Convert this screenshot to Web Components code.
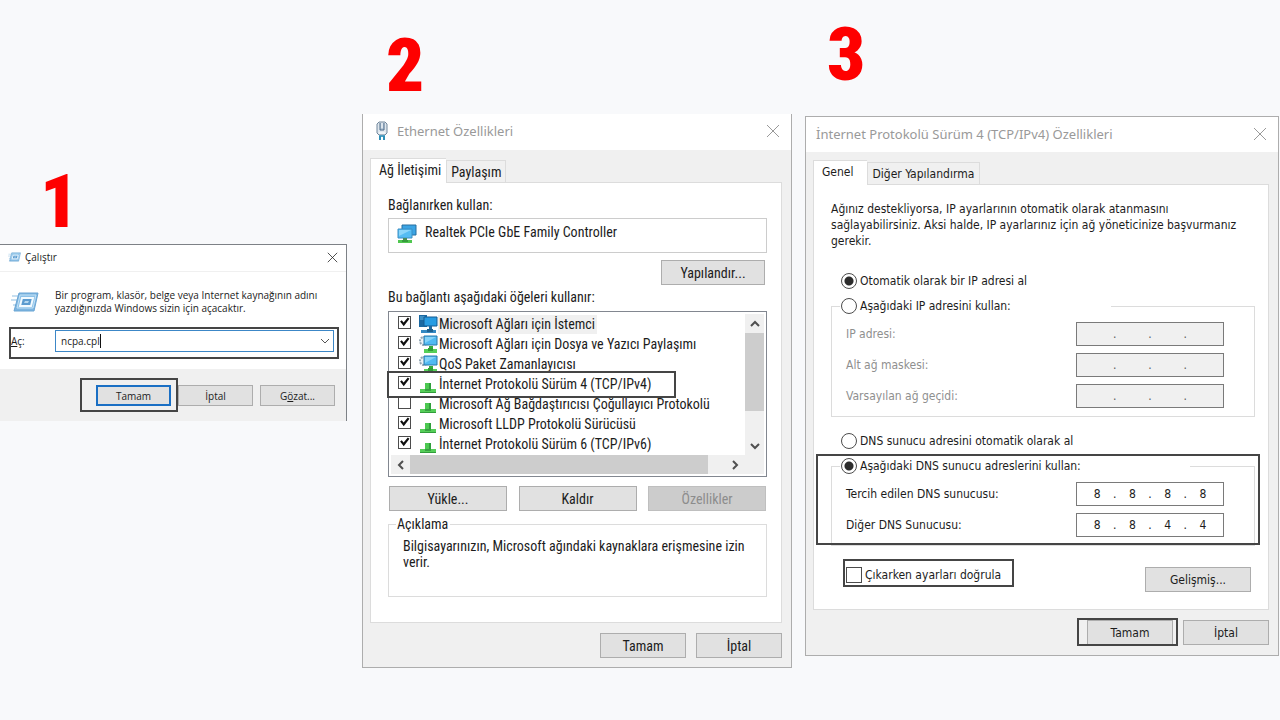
<!DOCTYPE html>
<html lang="tr">
<head>
<meta charset="utf-8">
<meta name="viewport" content="width=device-width, initial-scale=1">
<title>DNS Ayarları</title>
<style>
  body {
    margin: 0;
    background: #f8f9fb;
    color: #1c1c1c;
    font-family: "Liberation Sans", Arial, sans-serif;
  }
  .steps {
    display: grid;
    grid-template-columns: 349fr 430fr 474fr;
    column-gap: 13px;
    padding-right: 1px;
    align-items: start;
  }
  .step-run { padding-top: 173px; --number-indent: 40px; --number-gap: 15px; margin-right: 2px; }
  .step-adapter { padding-top: 37px; --number-indent: 24px; --number-gap: 21px; }
  .step-ipv4 { padding-top: 26px; --number-indent: 22px; --number-gap: 34px; }
</style>
</head>
<body>
<main class="steps">
  <step-column class="step-run" number="1"><run-dialog></run-dialog></step-column>
  <step-column class="step-adapter" number="2"><adapter-dialog></adapter-dialog></step-column>
  <step-column class="step-ipv4" number="3"><ipv4-dialog></ipv4-dialog></step-column>
</main>

<script>
// ---------- icons ----------
const ICONS = {
  run: `
    <svg viewBox="0 0 28 20" aria-hidden="true">
      <path d="M1 4h8M0 8h7M2 13h5" stroke="#8fbfe2" stroke-width="1"/>
      <path d="M8 1h19l-4 18H3z" fill="#7db5e0" stroke="#6aa5d4"/>
      <path d="M9 3h16l-3 13H6z" fill="#8cc1e8" stroke="#c4e2f6" stroke-width="1"/>
      <path d="M11 6h11l-2 8H9z" fill="#5b9bcf" stroke="#f2faff" stroke-width="2"/>
      <path d="M14 9h4l-1 2h-4z" fill="#b4d7ef"/>
    </svg>`,
  plug: `
    <svg viewBox="0 0 12 20" aria-hidden="true">
      <path d="M3 1h6l2 2v9l-2 2H3l-2-2V3z" fill="#dfe7ee" stroke="#71869b"/>
      <path d="M4 2v7h4V2" fill="#b9cad9" stroke="#4d6b88"/>
      <path d="M6 2v5M3 12h6" stroke="#fff"/>
      <path d="M3 14h6v2H3z" fill="#4f9fc2"/>
      <path d="M3 15h2v4H3zM7 15h2v4H7z" fill="#2d8fb8"/>
    </svg>`,
  adapter: `
    <svg viewBox="0 0 20 20" aria-hidden="true">
      <path d="M5 1h14v10H5z" fill="#3ba4e4" stroke="#276f9f"/>
      <path d="M1 5h14v9H1z" fill="#55bdf3" stroke="#3c8fc4"/>
      <path d="M2 6h12L2 12z" fill="#8cd6fa"/>
      <path d="M6 14h4v2H6z" fill="#4d8d5b"/>
      <path d="M1 16h14v3H1z" fill="#50c750"/>
      <path d="M5 16h6v2H5z" fill="#379c3d"/>
    </svg>`,
  client: `
    <svg viewBox="0 0 20 20" aria-hidden="true">
      <path d="M1 1h8v12H1z" fill="#1b68a1"/>
      <path d="M2 3h5M2 5h5" stroke="#65b9e8"/>
      <path d="M6 3h13v9H6z" fill="#289ce2" stroke="#155b91"/>
      <path d="M11 12h3v4h-3z" fill="#226ba0"/>
      <path d="M3 16h15v3H3z" fill="#3489c2"/>
      <path d="M9 15h6v3H9z" fill="#1f5f8d"/>
    </svg>`,
  service: `
    <svg viewBox="0 0 20 20" aria-hidden="true">
      <circle cx="6" cy="7" r="4" fill="#edf2f5" stroke="#8fa3b1" stroke-width="2" stroke-dasharray="2 1"/>
      <path d="M6 2h13v9H6z" fill="#51baf2" stroke="#2b78a8"/>
      <path d="M7 3h11L7 9z" fill="#86d3f9"/>
      <path d="M11 12h4v4h-4z" fill="#35aa3b"/>
      <path d="M6 15h13v4H6z" fill="#55cf58"/>
      <path d="M10 14h5v3h-5z" fill="#319c38"/>
    </svg>`,
  protocol: `
    <svg viewBox="0 0 20 20" aria-hidden="true">
      <path d="M7 9h6v7H7z" fill="#4cc851"/>
      <path d="M11 9h2v7h-2z" fill="#2f9f3a"/>
      <path d="M2 15h16v4H2z" fill="#55ce58"/>
      <path d="M2 18h16v1H2z" fill="#319c3c"/>
      <path d="M7 15h6v2H7z" fill="#399f43"/>
    </svg>`,
  close: `
    <svg viewBox="0 0 14 14" aria-hidden="true">
      <path d="M1 1l12 12M13 1L1 13" fill="none" stroke="currentColor"/>
    </svg>`,
  chevron: `
    <svg viewBox="0 0 10 10" aria-hidden="true">
      <path d="M1 3l4 4 4-4" fill="none" stroke="currentColor" stroke-width="var(--chevron-stroke, 2)"/>
    </svg>`
};

// ---------- base ----------
class UiElement extends HTMLElement {
  constructor() {
    super();
    this.attachShadow({ mode: 'open' });
  }

  connectedCallback() {
    this.shadowRoot.innerHTML = `
      <style>
        *, *::before, *::after { box-sizing: border-box; }
        :host { display: block; box-sizing: border-box; }
        svg { display: block; width: 100%; height: 100%; }
      </style>
      ${this.render()}
    `;
  }
}

// ---------- shared pieces ----------
class StepColumn extends UiElement {
  render() {
    return `
      <style>
        :host { min-width: 0; }
        h2 {
          margin: 0 0 var(--number-gap) var(--number-indent);
          color: #fe0000;
          font: 900 75px/56px "Roboto Condensed", Roboto, sans-serif;
        }
      </style>
      <h2>${this.getAttribute('number')}</h2>
      <slot></slot>
    `;
  }
}

class WinDialog extends UiElement {
  render() {
    const icon = this.getAttribute('icon');
    return `
      <style>
        :host {
          background: #f0f0f0;
          border: 1px solid #adadad;
          font-size: var(--ui-size);
        }
        header {
          display: flex;
          align-items: center;
          height: var(--title-height, 36px);
          padding: 0 var(--title-right, 11px) 2px var(--title-left, 10px);
          background: #fff;
          color: var(--title-color, #999);
        }
        .icon { flex: none; width: var(--icon-width, 12px); height: var(--icon-height, 20px); margin-right: var(--icon-gap, 9px); }
        h3 { flex: 1; margin: 0; font: var(--title-font, 13px/18px "Noto Sans", sans-serif); white-space: nowrap; }
        button { flex: none; width: var(--close-size, 14px); height: var(--close-size, 14px); padding: 0; border: 0; background: none; color: inherit; }
      </style>
      <header>
        ${icon ? `<span class="icon">${ICONS[icon]}</span>` : ''}
        <h3>${this.getAttribute('heading')}</h3>
        <button aria-label="Kapat">${ICONS.close}</button>
      </header>
      <slot></slot>
    `;
  }
}

class WinButton extends UiElement {
  render() {
    return `
      <style>
        :host { width: var(--button-width, 86px); height: var(--button-height, 25px); }
        button {
          width: 100%;
          height: 100%;
          padding: 0;
          border: 1px solid #adadad;
          background: #e1e1e1;
          color: inherit;
          font: inherit;
        }
        button:disabled { background: #ccc; border-color: #bfbfbf; color: #8c8c8c; }
        :host([default]) button { border: 2px solid #1a6fc4; }
      </style>
      <button ${this.hasAttribute('disabled') ? 'disabled' : ''}><slot></slot></button>
    `;
  }
}

// Dark outline drawn over the wrapped content, spread by --spread.
class MarkBox extends UiElement {
  render() {
    return `
      <style>
        :host { position: relative; }
        :host::after {
          content: "";
          position: absolute;
          inset: var(--spread, -4px);
          border: 2px solid #454545;
          pointer-events: none;
        }
      </style>
      <slot></slot>
    `;
  }
}

class TabPanel extends UiElement {
  render() {
    const [active, other] = this.getAttribute('tabs').split('|');
    return `
      <style>
        :host { padding: 8px 9px 0 7px; }
        [role=tablist] { display: flex; align-items: flex-end; }
        button {
          height: 22px;
          padding: 0 var(--tab-padding, 5px);
          border: 1px solid #dcdcdc;
          border-bottom: 0;
          background: #f0f0f0;
          color: inherit;
          font: inherit;
          white-space: nowrap;
        }
        button[aria-selected=true] {
          position: relative;
          height: 25px;
          margin-bottom: -1px;
          padding: 0 var(--tab-end, 10px) 2px 8px;
          border-right: 0;
          background: #fff;
        }
        section { border: 1px solid #dcdcdc; background: #fff; padding: var(--panel-padding); }
      </style>
      <div role="tablist">
        <button role="tab" aria-selected="true">${active}</button>
        <button role="tab" aria-selected="false">${other}</button>
      </div>
      <section role="tabpanel" aria-label="${active}"><slot></slot></section>
    `;
  }
}

class GroupBox extends UiElement {
  render() {
    return `
      <style>
        fieldset {
          min-width: 0;
          margin: 0;
          padding: var(--group-padding);
          border: 1px solid #dcdcdc;
        }
        legend { min-width: var(--legend-width, 0); height: 18px; line-height: 18px; margin-left: var(--legend-left, -7px); padding: 0 2px 0 1px; }
      </style>
      <fieldset>
        <legend><slot name="legend"></slot></legend>
        <slot></slot>
      </fieldset>
    `;
  }
}

// Radio button or tick box with its text; kind="radio" or kind="checkbox".
class ChoiceOption extends UiElement {
  render() {
    const kind = this.getAttribute('kind');
    return `
      <style>
        label { display: flex; align-items: center; gap: 3px; height: 18px; white-space: nowrap; }
        input { appearance: none; flex: none; width: 16px; height: 16px; margin: 0; border: 1px solid #4c4c4c; background: #fff; }
        input[type=radio] { border-radius: 50%; }
        input[type=radio]:checked { background: radial-gradient(circle, #2c2c2c 0 4px, #fff 5px); }
      </style>
      <label>
        <input type="${kind}" ${this.hasAttribute('checked') ? 'checked' : ''}>
        <span><slot></slot></span>
      </label>
    `;
  }
}

// ---------- step 1 ----------
class RunDialog extends UiElement {
  render() {
    return `
      <style>
        :host { --ui-size: 10px; font-family: "Open Sans", sans-serif; }
        win-dialog {
          --title-height: 26px;
          --title-left: 8px;
          --title-right: 8px;
          --title-color: #222;
          --title-font: 10px "Open Sans", sans-serif;
          --icon-width: 13px;
          --icon-height: 10px;
          --icon-gap: 4px;
          --close-size: 11px;
          border-color: #7d8186;
          border-left: 0;
          border-bottom: 0;
        }
        .body { padding: 17px 7px 17px 11px; background: #fff; border-top: 1px solid #f0f0f0; }
        .intro { display: flex; align-items: center; gap: 16px; }
        .intro span { flex: none; width: 28px; height: 20px; }
        p { margin: 0; line-height: 13px; white-space: nowrap; }
        .open { display: flex; align-items: center; margin: 15px 5px 0 0; }
        .open label { width: 44px; }
        .combo { flex: 1; display: flex; align-items: center; height: 22px; border: 1px solid #3c87c7; background: #fff; }
        input { field-sizing: content; min-width: 0; height: 14px; margin-left: 5px; padding: 0; border: 0; border-right: 1px solid #111; font: inherit; color: inherit; outline: 0; }
        .combo button { width: 10px; height: 10px; margin: 0 3px 0 auto; padding: 0; border: 0; background: none; color: #555; --chevron-stroke: 1; }
        footer { display: flex; justify-content: flex-end; gap: 7px; padding: 16px 11px 15px; --button-width: 75px; --button-height: 21px; }
      </style>
      <win-dialog heading="Çalıştır" icon="run">
        <div class="body">
          <div class="intro">
            <span>${ICONS.run}</span>
            <p>Bir program, klasör, belge veya Internet kaynağının adını<br>yazdığınızda Windows sizin için açacaktır.</p>
          </div>
          <mark-box style="--spread: -3px 0 -7px -2px">
            <div class="open">
              <label for="command"><u>A</u>ç:</label>
              <div class="combo">
                <input id="command" value="ncpa.cpl" spellcheck="false">
                <button aria-label="Geçmiş">${ICONS.chevron}</button>
              </div>
            </div>
          </mark-box>
        </div>
        <footer>
          <mark-box style="--spread: -7px -7px -6px -16px"><win-button default>Tamam</win-button></mark-box>
          <win-button>İptal</win-button>
          <win-button>G<u>ö</u>zat...</win-button>
        </footer>
      </win-dialog>
    `;
  }
}

// ---------- step 2 ----------
class ComponentRow extends UiElement {
  render() {
    return `
      <style>
        :host { width: max-content; }
        label { display: flex; align-items: center; height: 20px; white-space: nowrap; }
        input { appearance: none; flex: none; display: grid; place-content: center; width: 13px; height: 13px; margin: 0 7px 4px; border: 1px solid #4c4c4c; background: #fff; }
        input:checked::before { content: ""; width: 11px; height: 11px; background: #111; clip-path: polygon(10% 45%, 25% 35%, 42% 55%, 80% 10%, 95% 20%, 43% 88%); }
        .icon { flex: none; width: 20px; height: 20px; }
        .text { padding: 0 2px 0 1px; line-height: 19px; }
        :host([selected]) .text { background: #f0f0f0; }
      </style>
      <label>
        <input type="checkbox" ${this.hasAttribute('checked') ? 'checked' : ''}>
        <span class="icon">${ICONS[this.getAttribute('icon')]}</span>
        <span class="text"><slot></slot></span>
      </label>
    `;
  }
}

class ScrollList extends UiElement {
  render() {
    return `
      <style>
        :host {
          display: grid;
          grid-template: 1fr 19px / 1fr 19px;
          height: 166px;
          padding: 2px;
          border: 1px solid #828790;
          background: #fff;
        }
        .rows { min-width: 0; }
        .bar { display: flex; background: #f0f0f0; }
        .bar button { flex: none; display: grid; place-content: center; width: 19px; height: 19px; padding: 0; border: 0; background: none; color: #505050; }
        .bar svg { width: 10px; height: 10px; }
        .thumb { background: #cdcdcd; }
        .vertical { flex-direction: column; justify-content: space-between; }
        .vertical .thumb { height: 78px; margin-bottom: auto; }
        .horizontal { grid-column: 1 / 3; padding-right: 20px; }
        .horizontal .thumb { flex: 1; margin-right: 17px; }
        .up svg { transform: rotate(180deg); }
        .left svg { transform: rotate(90deg); }
        .right svg { transform: rotate(-90deg); }
      </style>
      <div class="rows"><slot></slot></div>
      <div class="bar vertical">
        <button class="up" aria-label="Yukarı">${ICONS.chevron}</button>
        <div class="thumb"></div>
        <button aria-label="Aşağı">${ICONS.chevron}</button>
      </div>
      <div class="bar horizontal">
        <button class="left" aria-label="Sola">${ICONS.chevron}</button>
        <div class="thumb"></div>
        <button class="right" aria-label="Sağa">${ICONS.chevron}</button>
      </div>
    `;
  }
}

class AdapterDialog extends UiElement {
  render() {
    return `
      <style>
        :host { --ui-size: 14px; font-family: "Roboto Condensed", Roboto, sans-serif; }
        win-dialog { --title-left: 13px; border-top: 0; }
        tab-panel { --tab-end: 5px; --tab-padding: 4px; --panel-padding: 14px 14px 25px 17px; }
        p { margin: 0; line-height: 16px; }
        .adapter { display: flex; align-items: flex-start; gap: 8px; height: 35px; margin-top: 5px; padding: 5px 8px; border: 1px solid #ccc; }
        .adapter span { width: 20px; height: 20px; }
        .configure { display: flex; justify-content: flex-end; margin: 7px 2px 4px; --button-width: 104px; }
        scroll-list { margin-top: 6px; }
        .actions { display: flex; justify-content: space-between; margin: 9px 1px 4px; --button-width: 118px; }
        group-box { --group-padding: 5px 15px 26px 14px; }
        footer { display: flex; justify-content: flex-end; gap: 10px; padding: 10px 9px 9px; }
      </style>
      <win-dialog heading="Ethernet Özellikleri" icon="plug">
        <tab-panel tabs="Ağ İletişimi|Paylaşım">
          <p>Bağlanırken kullan:</p>
          <div class="adapter"><span>${ICONS.adapter}</span><p>Realtek PCIe GbE Family Controller</p></div>
          <div class="configure"><win-button>Yapılandır...</win-button></div>
          <p>Bu bağlantı aşağıdaki öğeleri kullanır:</p>
          <scroll-list>
            <component-row icon="client" checked selected>Microsoft Ağları için İstemci</component-row>
            <component-row icon="service" checked>Microsoft Ağları için Dosya ve Yazıcı Paylaşımı</component-row>
            <component-row icon="service" checked>QoS Paket Zamanlayıcısı</component-row>
            <mark-box style="width: max-content; --spread: -3px -23px -4px -4px">
              <component-row icon="protocol" checked>İnternet Protokolü Sürüm 4 (TCP/IPv4)</component-row>
            </mark-box>
            <component-row icon="protocol">Microsoft Ağ Bağdaştırıcısı Çoğullayıcı Protokolü</component-row>
            <component-row icon="protocol" checked>Microsoft LLDP Protokolü Sürücüsü</component-row>
            <component-row icon="protocol" checked>İnternet Protokolü Sürüm 6 (TCP/IPv6)</component-row>
          </scroll-list>
          <div class="actions">
            <win-button>Yükle...</win-button>
            <win-button>Kaldır</win-button>
            <win-button disabled>Özellikler</win-button>
          </div>
          <group-box>
            <span slot="legend">Açıklama</span>
            <p>Bilgisayarınızın, Microsoft ağındaki kaynaklara erişmesine izin verir.</p>
          </group-box>
        </tab-panel>
        <footer>
          <win-button>Tamam</win-button>
          <win-button>İptal</win-button>
        </footer>
      </win-dialog>
    `;
  }
}

// ---------- step 3 ----------
class IpField extends UiElement {
  render() {
    const label = this.getAttribute('label');
    const octets = (this.getAttribute('value') || '...').split('.');
    const disabled = this.hasAttribute('disabled') ? 'disabled' : '';
    const inputs = octets.map((octet, i) => `
      <input ${i ? '' : 'id="first"'} aria-label="${label} ${i + 1}" value="${octet}" ${disabled}>
    `);
    return `
      <style>
        :host { display: flex; align-items: center; justify-content: space-between; }
        label { white-space: nowrap; }
        .field { display: flex; align-items: center; width: 148px; height: 24px; padding: 0 6px; border: 1px solid #7a7a7a; background: #fff; }
        input { flex: 1; min-width: 0; width: 0; padding: 0; border: 0; background: none; color: inherit; font: inherit; text-align: center; }
        i { width: 7px; text-align: center; font-style: normal; }
        :host([disabled]) label { color: #8f8f8f; }
        :host([disabled]) .field { background: #f0f0f0; color: #5c5c5c; }
      </style>
      <label for="first">${label}</label>
      <div class="field">${inputs.join('<i>.</i>')}</div>
    `;
  }
}

class Ipv4Dialog extends UiElement {
  render() {
    return `
      <style>
        :host { --ui-size: 12px; font-family: "DejaVu Sans Condensed", "DejaVu Sans", sans-serif; }
        win-dialog { --title-height: 35px; }
        tab-panel { --tab-end: 13px; --panel-padding: 16px 13px 17px 17px; }
        p { margin: 0 0 23px; line-height: 16px; }
        .single { margin-left: 10px; }
        .single + * { margin-top: 7px; }
        group-box { --legend-left: -6px; --group-padding: 7px 30px 8px 14px; }
        .manual-ip { --legend-width: 271px; margin-bottom: 15px; }
        .manual-dns { --legend-width: 350px; }
        ip-field + ip-field { margin-top: 7px; }
        .bottom { display: flex; justify-content: space-between; min-height: 26px; margin: 20px 4px 0 15px; }
        .bottom win-button { align-self: flex-end; --button-width: 106px; }
        .bottom mark-box { align-self: flex-start; }
        footer { display: flex; justify-content: flex-end; gap: 10px; padding: 10px 9px 10px; }
      </style>
      <win-dialog heading="İnternet Protokolü Sürüm 4 (TCP/IPv4) Özellikleri">
        <tab-panel tabs="Genel|Diğer Yapılandırma">
          <p>Ağınız destekliyorsa, IP ayarlarının otomatik olarak atanmasını sağlayabilirsiniz. Aksi halde, IP ayarlarınız için ağ yöneticinize başvurmanız gerekir.</p>
          <choice-option class="single" kind="radio" checked>Otomatik olarak bir IP adresi al</choice-option>
          <group-box class="manual-ip">
            <choice-option slot="legend" kind="radio">Aşağıdaki IP adresini kullan:</choice-option>
            <ip-field label="IP adresi:" disabled></ip-field>
            <ip-field label="Alt ağ maskesi:" disabled></ip-field>
            <ip-field label="Varsayılan ağ geçidi:" disabled></ip-field>
          </group-box>
          <choice-option class="single" kind="radio">DNS sunucu adresini otomatik olarak al</choice-option>
          <mark-box style="--spread: -3px -5px 1px -15px">
            <group-box class="manual-dns">
              <choice-option slot="legend" kind="radio" checked>Aşağıdaki DNS sunucu adreslerini kullan:</choice-option>
              <ip-field label="Tercih edilen DNS sunucusu:" value="8.8.8.8"></ip-field>
              <ip-field label="Diğer DNS Sunucusu:" value="8.8.4.4"></ip-field>
            </group-box>
          </mark-box>
          <div class="bottom">
            <mark-box style="--spread: -7px -13px -3px -3px">
              <choice-option kind="checkbox">Çıkarken ayarları doğrula</choice-option>
            </mark-box>
            <win-button>Gelişmiş...</win-button>
          </div>
        </tab-panel>
        <footer>
          <mark-box style="--spread: -2px -5px -1px -10px"><win-button>Tamam</win-button></mark-box>
          <win-button>İptal</win-button>
        </footer>
      </win-dialog>
    `;
  }
}

customElements.define('step-column', StepColumn);
customElements.define('win-dialog', WinDialog);
customElements.define('win-button', WinButton);
customElements.define('mark-box', MarkBox);
customElements.define('tab-panel', TabPanel);
customElements.define('group-box', GroupBox);
customElements.define('choice-option', ChoiceOption);
customElements.define('component-row', ComponentRow);
customElements.define('scroll-list', ScrollList);
customElements.define('ip-field', IpField);
customElements.define('run-dialog', RunDialog);
customElements.define('adapter-dialog', AdapterDialog);
customElements.define('ipv4-dialog', Ipv4Dialog);
</script>
</body>
</html>
